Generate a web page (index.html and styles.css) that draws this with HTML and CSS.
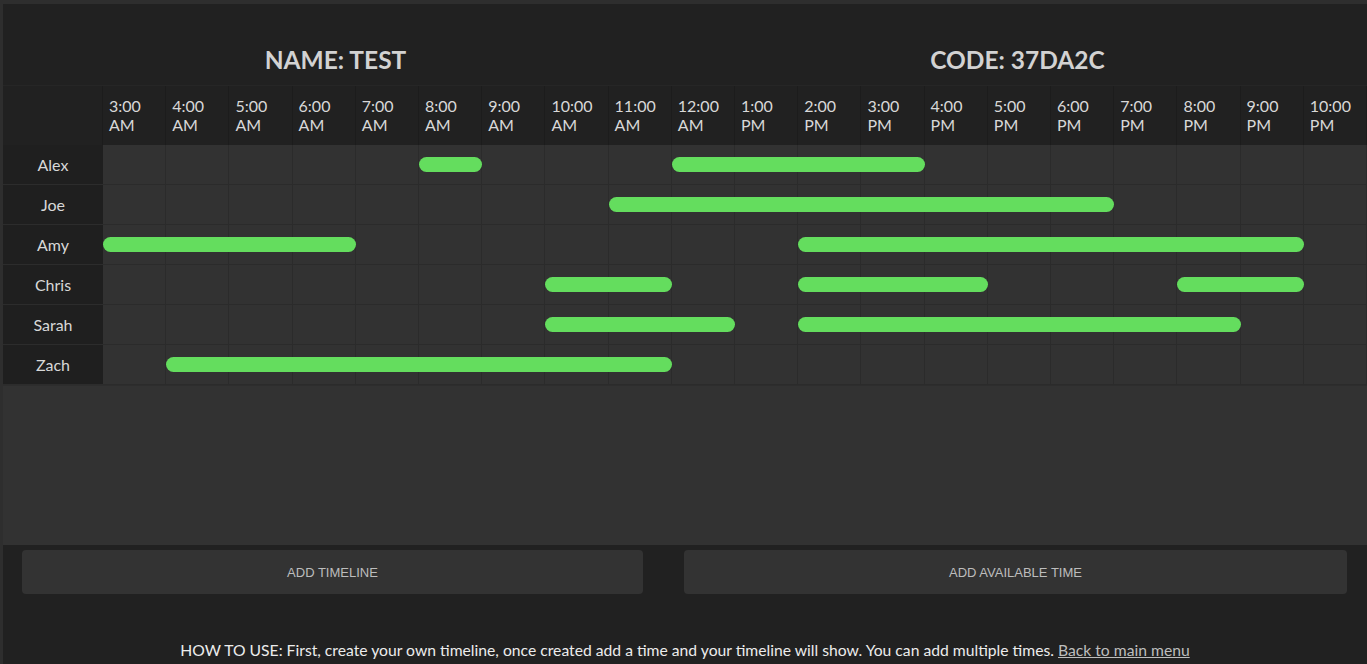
FILE: index.html
```html
<!DOCTYPE html>
<html>
<head>
<meta charset="utf-8">
<link rel="stylesheet" href="styles.css">
</head>
<body>
<div class="page">
  <div class="titles">
    <h1 class="title">NAME: TEST</h1>
    <h1 class="title">CODE: 37DA2C</h1>
  </div>
  <div class="table">
    <div class="head-row">
      <div class="corner"></div>
      <div class="times">
        <div class="time">3:00<br>AM</div>
        <div class="time">4:00<br>AM</div>
        <div class="time">5:00<br>AM</div>
        <div class="time">6:00<br>AM</div>
        <div class="time">7:00<br>AM</div>
        <div class="time">8:00<br>AM</div>
        <div class="time">9:00<br>AM</div>
        <div class="time">10:00<br>AM</div>
        <div class="time">11:00<br>AM</div>
        <div class="time">12:00<br>AM</div>
        <div class="time">1:00<br>PM</div>
        <div class="time">2:00<br>PM</div>
        <div class="time">3:00<br>PM</div>
        <div class="time">4:00<br>PM</div>
        <div class="time">5:00<br>PM</div>
        <div class="time">6:00<br>PM</div>
        <div class="time">7:00<br>PM</div>
        <div class="time">8:00<br>PM</div>
        <div class="time">9:00<br>PM</div>
        <div class="time">10:00<br>PM</div>
      </div>
    </div>
    <div id="rows"></div>
    <div class="filler"></div>
  </div>
  <div class="buttons">
    <button class="btn">ADD TIMELINE</button>
    <button class="btn">ADD AVAILABLE TIME</button>
  </div>
  <p class="help">HOW TO USE: First, create your own timeline, once created add a time and your timeline will show. You can add multiple times. <a href="#" class="link">Back to main menu</a></p>
</div>
<script src="app.js"></script>
</body>
</html>
```
FILE: app.js
```js
var data = [
  ["Alex", [[5, 6], [9, 13]]],
  ["Joe", [[8, 16]]],
  ["Amy", [[0, 4], [11, 19]]],
  ["Chris", [[7, 9], [11, 14], [17, 19]]],
  ["Sarah", [[7, 10], [11, 18]]],
  ["Zach", [[1, 9]]]
];
var rows = document.getElementById("rows");
data.forEach(function (d) {
  var row = document.createElement("div");
  row.className = "row";
  var name = document.createElement("div");
  name.className = "name";
  name.textContent = d[0];
  row.appendChild(name);
  var track = document.createElement("div");
  track.className = "track";
  for (var i = 0; i < 20; i++) {
    var c = document.createElement("div");
    c.className = "cell";
    c.style.gridColumn = (i + 1) + " / " + (i + 2);
    track.appendChild(c);
  }
  d[1].forEach(function (b) {
    var bar = document.createElement("div");
    bar.className = "bar";
    bar.style.gridColumn = (b[0] + 1) + " / " + (b[1] + 1);
    track.appendChild(bar);
  });
  row.appendChild(track);
  rows.appendChild(row);
});
```
FILE: styles.css
```css
html, body {
  margin: 0;
  padding: 0;
  background: #2e2e2e;
  height: 100%;
  overflow: hidden;
}
.page {
  margin: 4px 0 0 3px;
  background: #212121;
  min-height: 660px;
  font-family: Lato, "Open Sans", sans-serif;
  color: #dcdcdc;
}
.titles {
  display: grid;
  grid-template-columns: 682px 682px;
  padding: 41px 0 10px;
}
.title {
  margin: 0;
  padding-right: 17px;
  font-size: 24.5px;
  line-height: 30px;
  font-weight: 700;
  text-align: center;
  color: #d2d2d2;
}
.table {
  border-top: 1px solid #262626;
}
.head-row {
  display: flex;
  height: 59px;
}
.corner {
  width: 100px;
  flex: none;
  border-right: 1px solid #1c1c1c;
  box-sizing: border-box;
}
.times {
  flex: 1;
  display: grid;
  grid-template-columns: repeat(20, 1fr);
}
.time {
  padding: 10px 0 0 6px;
  font-size: 16px;
  line-height: 19px;
  color: #d8d8d8;
  border-right: 1px solid #1c1c1c;
}
.row {
  display: flex;
  height: 40px;
}
.name {
  width: 100px;
  flex: none;
  background: #1f1f1f;
  border-bottom: 1px solid #2c2c2c;
  box-sizing: border-box;
  display: flex;
  align-items: center;
  justify-content: center;
  font-size: 16px;
  color: #d8d8d8;
}
.track {
  flex: 1;
  display: grid;
  grid-template-columns: repeat(20, 1fr);
  grid-template-rows: 40px;
  background: #323232;
}
.cell {
  grid-row: 1;
  border-right: 1px solid #2b2b2b;
  border-bottom: 1px solid #2b2b2b;
}
.bar {
  grid-row: 1;
  align-self: center;
  height: 15px;
  border-radius: 8px;
  background: #64dd5e;
  margin-top: -1px;
}
.filler {
  height: 159px;
  background: #323232;
  border-top: 1px solid #2d2d2d;
}
.buttons {
  display: grid;
  grid-template-columns: 621px 663px;
  column-gap: 41px;
  padding: 5px 0 0 19px;
}
.btn {
  height: 44px;
  border: none;
  border-radius: 4px;
  background: #333333;
  color: #bdbdbd;
  font-family: "Liberation Sans", Arial, sans-serif;
  font-size: 13px;
  padding: 0;
}
.help {
  margin: 0;
  padding-top: 47px;
  text-align: center;
  font-size: 15.7px;
  line-height: 18px;
  color: #ececec;
}
.link {
  color: #bdbdbd;
}
```
